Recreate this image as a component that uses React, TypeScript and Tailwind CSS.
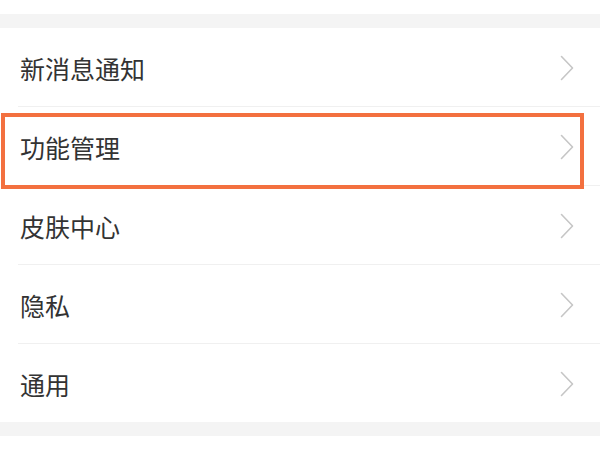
import React from "react";

const items = ["新消息通知", "功能管理", "皮肤中心", "隐私", "通用"];

function Chevron() {
  return (
    <svg width="14" height="26" viewBox="0 0 14 26" className="shrink-0">
      <path d="M1.5 1.5 L12.5 13 L1.5 24.5" fill="none" stroke="#c6c6c6" strokeWidth="1.6" strokeLinecap="round" strokeLinejoin="round" />
    </svg>
  );
}

export default function App() {
  return (
    <div
      className="w-[600px] h-[450px] bg-white overflow-hidden"
      style={{ fontFamily: '"Noto Sans CJK SC", "Noto Sans", sans-serif' }}
    >
      <div className="h-[14px] bg-white" />
      <div className="h-[14px] bg-[#f4f4f4]" />
      <div className="flex flex-col">
        {items.map((label, i) => (
          <div key={label} className="relative">
            <div className="h-[78px] flex items-center justify-between pl-[20px] pr-[26px] pt-[2px]">
              <span className="text-[25px] leading-none text-[#333333]">{label}</span>
              <Chevron />
            </div>
            {i < items.length - 1 && <div className="ml-[18px] h-px bg-[#f0f0f0]" />}
            {i === 1 && (
              <div className="absolute left-[1px] top-[6px] w-[583px] h-[76px] border-[4px] border-[#f3703f]" />
            )}
          </div>
        ))}
      </div>
      <div className="h-[14px] bg-[#f4f4f4]" />
      <div className="flex-1 bg-white" />
    </div>
  );
}
